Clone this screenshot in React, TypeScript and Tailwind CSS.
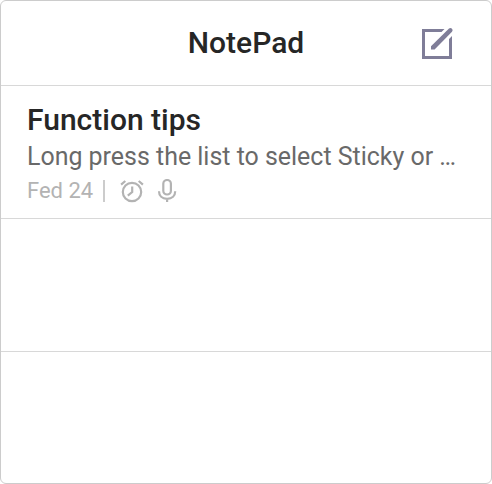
export default function App() {
  return (
    <div className="h-[484px] w-[492px] bg-white font-['Roboto',sans-serif]">
      <main className="flex h-full flex-col overflow-hidden rounded-[6px] border border-[#ccc] bg-white">
        <header className="flex h-[85px] shrink-0 items-center border-b border-[#d8d8d8] px-[37px]">
          <div className="w-8" />
          <h1 className="flex-1 text-center text-[30px] font-medium leading-none text-[#262626]">NotePad</h1>
          <button aria-label="New note" className="flex w-8 justify-center">
            <svg width="32" height="32" viewBox="0 0 32 32" fill="#7f7d98" className="overflow-visible">
              <path d="M0 2H22.5L19.5 5H3V29H27V12L30 9V32H0Z" />
              <path d="M9 19.3L27 1.5Q28.6 .4 30 1.8Q31.3 3.2 30 4.7L12.6 22.5H9Z" />
            </svg>
          </button>
        </header>
        <article className="h-[133px] shrink-0 border-b border-[#d8d8d8] px-[26px] pt-[16px]">
          <h2 className="text-[30px] font-medium leading-[36px] text-[#262626]">Function tips</h2>
          <p className="mt-px whitespace-nowrap text-[24.95px] leading-[36px] text-[#696969]">Long press the list to select Sticky or …</p>
          <div className="flex h-8 items-center text-[22px] leading-[32px] text-[#b3b3b3]">
            <span>Fed 24</span>
            <span className="ml-[10px] h-[22px] w-[2px] bg-[#ccc]" />
            <svg className="ml-[15px]" width="24" height="24" viewBox="0 0 24 24" fill="none" stroke="#b3b3b3" strokeWidth="2.2">
              <circle cx="12" cy="13" r="9.2" />
              <path d="M1.1 5.6L5.3 2M18.7 2L22.9 5.6M12.2 7.5V13L7.8 16.6" />
            </svg>
            <svg className="ml-[13px]" width="20" height="24" viewBox="0 0 20 24" fill="none" stroke="#b3b3b3" strokeWidth="2.2">
              <rect x="6.3" y="1" width="7.6" height="14.5" rx="3.8" />
              <path d="M2 12.2C2 17 5.2 19.8 10.1 19.8S18.2 17 18.2 12.2M10.1 20V23" />
            </svg>
          </div>
        </article>
        <div className="h-[133px] shrink-0 border-b border-[#d8d8d8]" />
      </main>
    </div>
  );
}
